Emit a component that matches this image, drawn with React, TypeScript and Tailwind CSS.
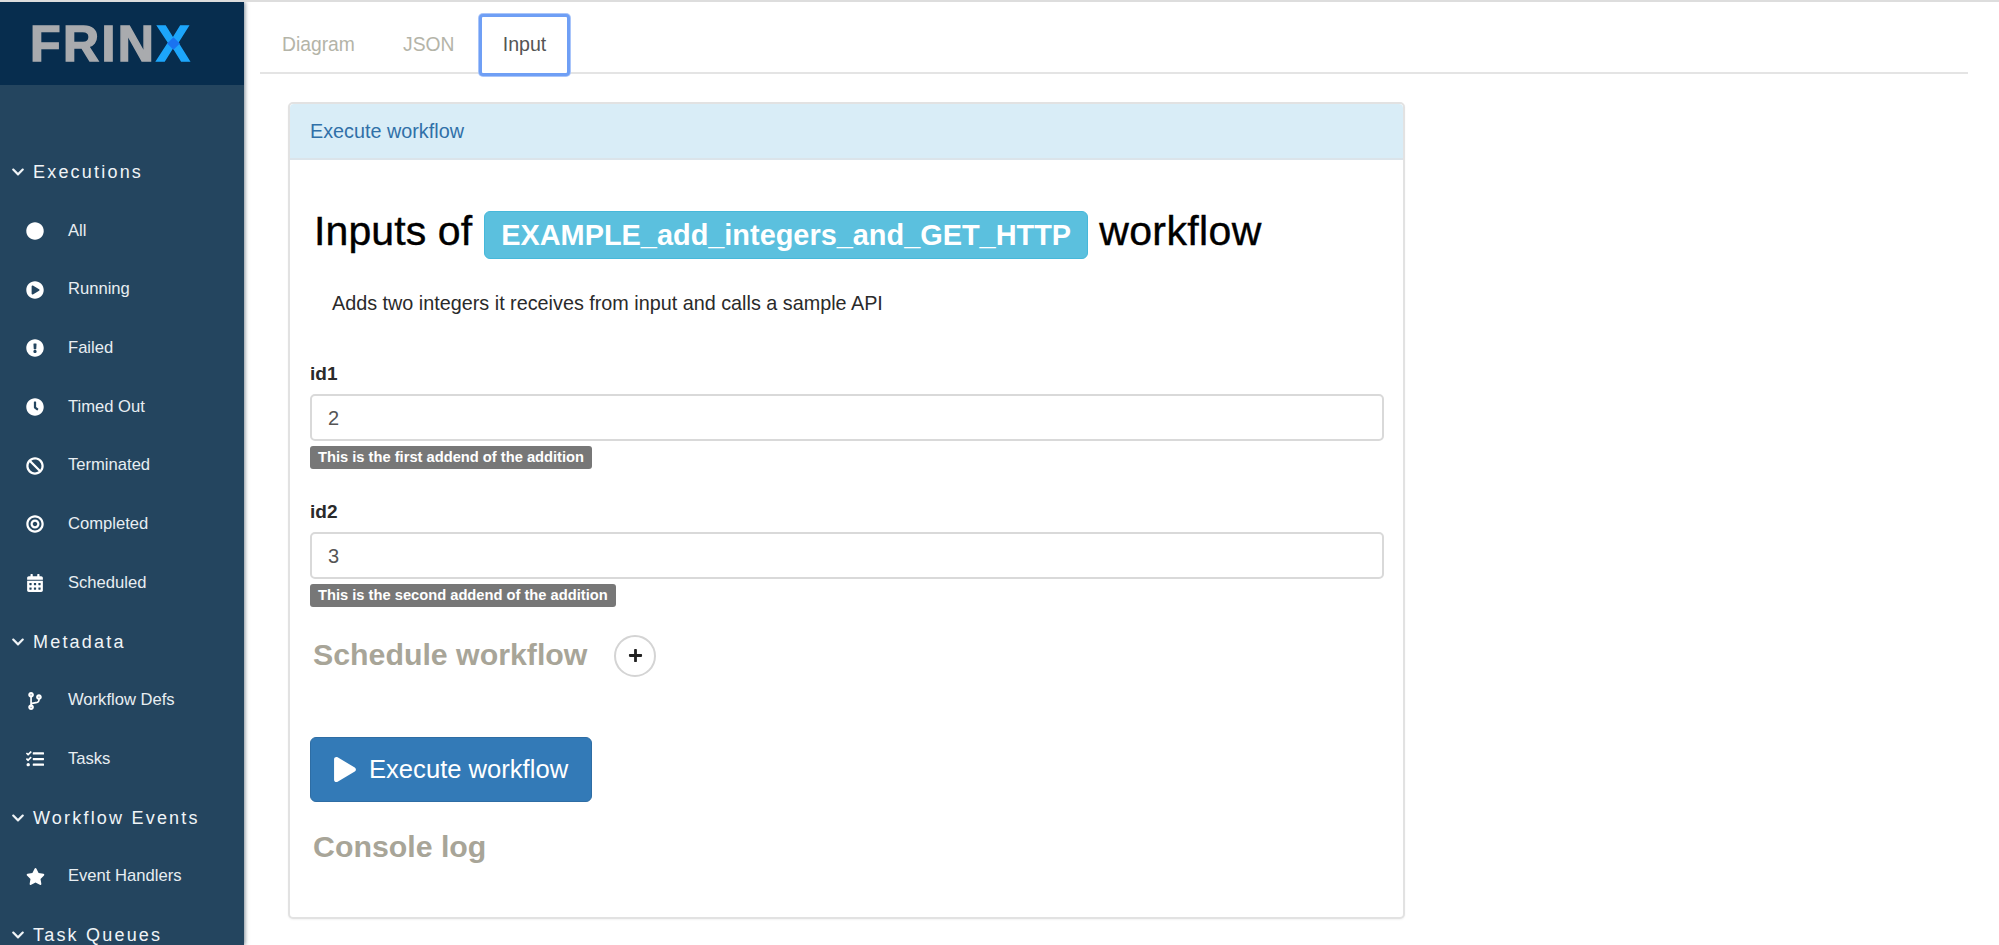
import React from "react";
import { FaBan, FaBullseye, FaCalendarAlt, FaChevronDown, FaCircle, FaClock, FaCodeBranch, FaExclamationCircle, FaPlay, FaPlayCircle, FaPlus, FaStar, FaTasks } from "react-icons/fa";

type Item = { label: string; icon: React.ReactNode };

function Section({ title }: { title: string }) {
  return (
    <div className="flex h-[58.7px] items-center pl-[11px] text-[18px] leading-none tracking-[2.2px] text-[#f0f4f7]">
      <FaChevronDown className="mr-[8px] h-[14px] w-[14px] shrink-0" />
      <span className="whitespace-nowrap">{title}</span>
    </div>
  );
}

function Row({ label, icon }: Item) {
  return (
    <div className="flex h-[58.7px] items-center pl-[26px] text-[16.6px] leading-none text-[#e8eef2]">
      <span className="flex w-[42px] shrink-0 items-center">{icon}</span>
      <span className="whitespace-nowrap">{label}</span>
    </div>
  );
}

function Field({ label, value, hint }: { label: string; value: string; hint: string }) {
  return (
    <div className="flex flex-col items-start">
      <label className="h-[21px] text-[19px] font-bold leading-[21px] text-[#2a2a2a]">{label}</label>
      <div className="mt-[10px] flex h-[47px] w-[1074px] items-center rounded-[5px] border-2 border-[#d9d9d9] bg-white pl-[16px] text-[20px] text-[#555]">{value}</div>
      <span className="mt-[5px] flex h-[23px] items-center whitespace-nowrap rounded-[3px] bg-[#777777] px-[8px] text-[14.7px] font-bold text-white">{hint}</span>
    </div>
  );
}

export default function App() {
  const ic = "h-[18px] w-[18px] text-white";
  return (
    <div className="flex h-screen overflow-hidden border-t-2 border-[#dddddd] bg-white font-['Liberation_Sans',Arial,sans-serif]">
      <aside className="z-10 flex w-[244px] shrink-0 flex-col overflow-hidden bg-[#24455f] shadow-[1px_0_4px_rgba(20,40,60,0.55)]">
        <div className="flex h-[83px] shrink-0 items-center bg-[#072d4e] pl-[30px]">
          <div className="relative text-[50px] font-bold leading-none tracking-[2.4px] text-[#a9abae] [-webkit-text-stroke:1.5px_#a9abae]">
            FRIN<span className="text-[#1da6fb] [-webkit-text-stroke:1.5px_#1da6fb]">X</span>
            <span className="absolute right-[14px] top-[20px] h-[9px] w-[9px] rotate-45 bg-[#1a73f0]" />
          </div>
        </div>
        <div className="mt-[58px] flex flex-col">
          <Section title="Executions" />
          <Row label="All" icon={<FaCircle className={ic} />} />
          <Row label="Running" icon={<FaPlayCircle className={ic} />} />
          <Row label="Failed" icon={<FaExclamationCircle className={ic} />} />
          <Row label="Timed Out" icon={<FaClock className={ic} />} />
          <Row label="Terminated" icon={<FaBan className={ic} />} />
          <Row label="Completed" icon={<FaBullseye className={ic} />} />
          <Row label="Scheduled" icon={<FaCalendarAlt className={ic} />} />
          <Section title="Metadata" />
          <Row label="Workflow Defs" icon={<FaCodeBranch className={ic} />} />
          <Row label="Tasks" icon={<FaTasks className={ic} />} />
          <Section title="Workflow Events" />
          <Row label="Event Handlers" icon={<FaStar className="h-[19px] w-[19px] text-white" />} />
          <Section title="Task Queues" />
        </div>
      </aside>
      <main className="min-w-0 flex-1">
        <div className="ml-[16px] mr-[31px] flex h-[72px] items-start border-b-2 border-[#e4e4e4] pl-[6px]">
          <div className="mt-[20px] flex h-[46px] w-[121px] items-center pl-[16px] text-[19.3px] text-[#b4b4a8]">Diagram</div>
          <div className="mt-[20px] flex h-[46px] w-[92px] items-center pl-[16px] text-[19.3px] text-[#b4b4a8]">JSON</div>
          <div className="mt-[12px] flex h-[62px] w-[91px] items-center justify-center rounded-[4px] border-[3px] border-[#6f9ff5] bg-white text-[19.6px] text-[#555] shadow-[0_0_0_1px_#a9c5fa]">Input</div>
        </div>
        <section className="ml-[44px] mt-[28px] h-[817px] w-[1117px] rounded-[5px] border-2 border-[#e2e2e2] bg-white shadow-[0_1px_2px_rgba(0,0,0,0.05)]">
          <div className="flex h-[56px] items-center rounded-t-[4px] border-b-2 border-[#dbe4ea] bg-[#d9edf7] pl-[20px] pt-[2px] text-[19.8px] text-[#3070a8]">Execute workflow</div>
          <div className="px-[20px]">
            <div className="ml-[4px] mt-[51px] flex h-[48px] items-center whitespace-nowrap text-[41px] leading-none text-black [-webkit-text-stroke:0.4px_black]">
              <span className="mb-[8px] tracking-[0.1px]">Inputs of</span>
              <span className="ml-[12px] flex h-[48px] items-center rounded-[6px] border border-[#46b8da] bg-[#5bc0de] px-[16px] text-[28.9px] font-bold text-white [-webkit-text-stroke:0px]">EXAMPLE_add_integers_and_GET_HTTP</span>
              <span className="mb-[8px] ml-[11px] tracking-[0.4px]">workflow</span>
            </div>
            <p className="ml-[22px] mt-[33px] h-[22px] text-[19.8px] leading-[22px] text-[#2a2a2a]">Adds two integers it receives from input and calls a sample API</p>
            <div className="mt-[49px] flex flex-col gap-[32px]">
              <Field label="id1" value="2" hint="This is the first addend of the addition" />
              <Field label="id2" value="3" hint="This is the second addend of the addition" />
            </div>
            <div className="ml-[3px] mt-[28px] flex h-[41px] items-center">
              <h3 className="text-[30.3px] font-bold leading-none text-[#a8a598]">Schedule workflow</h3>
              <span className="ml-[27px] flex h-[42px] w-[42px] items-center justify-center rounded-full border-2 border-[#d4d4d4] bg-white text-[#222]">
                <FaPlus className="h-[15px] w-[15px]" />
              </span>
            </div>
            <button className="mt-[61px] flex h-[65px] w-[282px] items-center rounded-[6px] border border-[#2e6da4] bg-[#337ab7] pl-[22px] text-[25.6px] text-white">
              <FaPlay className="mr-[12px] h-[25px] w-[24px]" />
              Execute workflow
            </button>
            <h3 className="ml-[3px] mt-[27px] text-[30.3px] font-bold leading-[36px] text-[#a8a598]">Console log</h3>
          </div>
        </section>
      </main>
    </div>
  );
}
